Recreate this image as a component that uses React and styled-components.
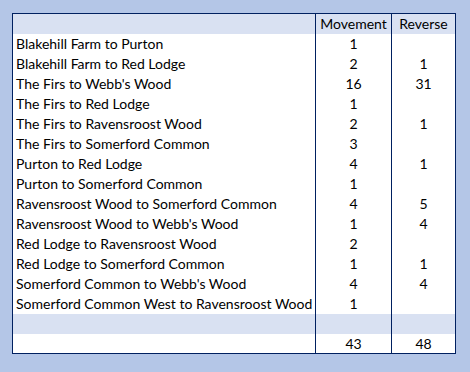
import styled, { createGlobalStyle } from "styled-components"

const Global = createGlobalStyle`
    html, body {
        margin: 0;
        padding: 0;
        background: #b4c6e7;
    }
`
const Page = styled.div`
    width: 470px;
    height: 372px;
    background: #b4c6e7;
    padding: 13px 0 0 12px;
    box-sizing: border-box;
`
const Table = styled.table`
    width: 444px;
    border-collapse: collapse;
    border: 1px solid #002060;
    background: #fff;
    font-family: Lato, "Liberation Sans", sans-serif;
    font-size: 14px;
    color: #000;
    table-layout: fixed;
`
const Row = styled.tr`
    height: 20px;
    background: ${p => (p.$shade ? "#d9e1f2" : "#fff")};
`
const HeadRow = styled(Row)`
    height: 19px;
`
const Cell = styled.td`
    padding: 0 0 0 3px;
    box-sizing: border-box;
    height: 20px;
    line-height: 19px;
    white-space: nowrap;
    overflow: hidden;
    vertical-align: middle;
`
const Num = styled.td`
    padding: 0;
    box-sizing: border-box;
    text-align: center;
    line-height: 19px;
    border-left: 1px solid #002060;
    white-space: nowrap;
`

const rows = [
    ["Blakehill Farm to Purton", 1, ""],
    ["Blakehill Farm to Red Lodge", 2, 1],
    ["The Firs to Webb's Wood", 16, 31],
    ["The Firs to Red Lodge", 1, ""],
    ["The Firs to Ravensroost Wood", 2, 1],
    ["The Firs to Somerford Common", 3, ""],
    ["Purton to Red Lodge", 4, 1],
    ["Purton to Somerford Common", 1, ""],
    ["Ravensroost Wood to Somerford Common", 4, 5],
    ["Ravensroost Wood to Webb's Wood", 1, 4],
    ["Red Lodge to Ravensroost Wood", 2, ""],
    ["Red Lodge to Somerford Common", 1, 1],
    ["Somerford Common to Webb's Wood", 4, 4],
    ["Somerford Common West to Ravensroost Wood", 1, ""],
]

const App = () => {
    return (
        <Page>
            <Global />
            <Table>
                <colgroup>
                    <col style={{ width: 303 }} />
                    <col style={{ width: 76 }} />
                    <col style={{ width: 64 }} />
                </colgroup>
                <tbody>
                    <HeadRow $shade>
                        <Cell></Cell>
                        <Num>Movement</Num>
                        <Num>Reverse</Num>
                    </HeadRow>
                    {rows.map(([name, m, r]) => (
                        <Row key={name}>
                            <Cell>{name}</Cell>
                            <Num>{m}</Num>
                            <Num>{r}</Num>
                        </Row>
                    ))}
                    <Row $shade>
                        <Cell></Cell>
                        <Num></Num>
                        <Num></Num>
                    </Row>
                    <Row>
                        <Cell></Cell>
                        <Num>43</Num>
                        <Num>48</Num>
                    </Row>
                </tbody>
            </Table>
        </Page>
    )
}

export default App
